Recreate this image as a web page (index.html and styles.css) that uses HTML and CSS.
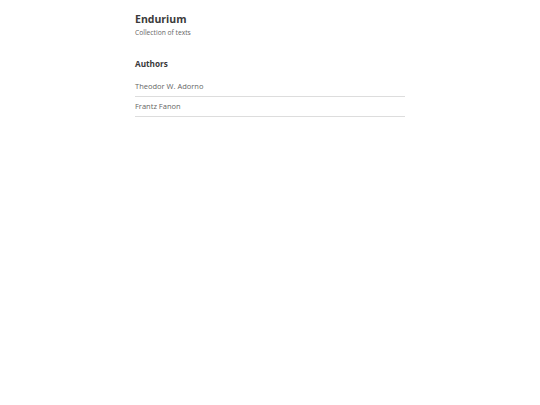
FILE: index.html
```html
<!DOCTYPE html>
<html>
<head>
<meta charset="utf-8">
<link rel="stylesheet" href="styles.css">
</head>
<body>
<div class="page">
  <header class="head">
    <h1 class="title">Endurium</h1>
    <p class="subtitle">Collection of texts</p>
  </header>
  <section class="authors">
    <h2 class="section-title">Authors</h2>
    <ul class="list">
      <li class="item">Theodor W. Adorno</li>
      <li class="item">Frantz Fanon</li>
    </ul>
  </section>
</div>
</body>
</html>
```
FILE: styles.css
```css
html, body {
  margin: 0;
  padding: 0;
  background: #fff;
}
body {
  font-family: "Open Sans", "DejaVu Sans", sans-serif;
  color: #333;
}
.page {
  width: 270px;
  margin: 0 auto;
  padding-top: 11px;
}
.title {
  margin: 0;
  font-size: 10.5px;
  font-weight: 700;
  line-height: 16px;
  color: #3a3a3a;
}
.subtitle {
  margin: 1px 0 0;
  font-size: 6.7px;
  line-height: 10px;
  color: #666;
}
.authors {
  margin-top: 19px;
}
.section-title {
  margin: 0 0 6px;
  font-size: 8.2px;
  font-weight: 700;
  line-height: 14px;
  color: #3a3a3a;
}
.list {
  list-style: none;
  margin: 0;
  padding: 0;
}
.item {
  font-size: 7.5px;
  line-height: 19px;
  color: #666;
  border-bottom: 1px solid #ddd;
}
```
